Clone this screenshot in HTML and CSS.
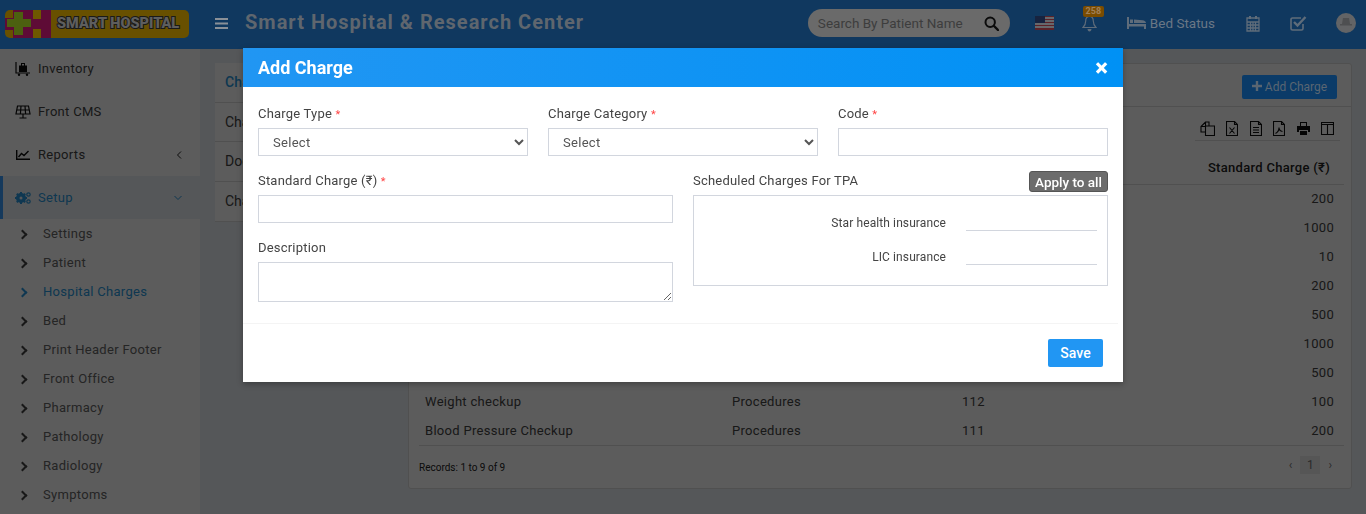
FILE: index.html
```html
<!doctype html>
<html>
  <head>
    <meta charset='utf-8'>
    <title>Smart Hospital</title>
    <link rel="stylesheet" href="styles.css">
  </head>
  <body>

    <div class='topbar'>
      <div class='logo'>
        <svg class='logo-mark' width='46' height='28' viewBox='0 0 46 28'>
          <path fill='#5e0b36' d='M8 0h38v28H8v-8H0V8h8z'/>
          <path fill='#4c6010' d='M9 2h9v7h8v8h-8v8H9v-8H2V9h7z'/>
          <path fill='#6e5800' d='M28 0h8v9h-8zM28 19h8v9h-8z'/>
        </svg>
        <span class='logo-text'>SMART HOSPITAL</span>
      </div>
      <svg class='burger' width='13' height='11' viewBox='0 0 13 11'>
        <path fill='#8a9097' d='M0 0h13v2H0zM0 4.500h13v2H0zM0 9h13v2H0z'/>
      </svg>
      <div class='site-name'>Smart Hospital &amp; Research Center</div>

      <div class='top-right'>
        <div class='search'>
          <span>Search By Patient Name</span>
          <svg width='15' height='15' viewBox='0 0 15 15'>
            <circle cx='6.200' cy='6.200' r='4.700' fill='none' stroke='#0b0b0b' stroke-width='2'/>
            <path d='M10 10l4 4' stroke='#0b0b0b' stroke-width='2.400' stroke-linecap='round'/>
          </svg>
        </div>
        <svg class='flag' width='19' height='14' viewBox='0 0 19 14'>
          <rect width='19' height='14' fill='#66686c'/>
          <path fill='#5c2228' d='M0 0h19v1H0zM0 3h19v1H0zM0 6h19v1H0zM0 9h19v1H0zM0 12h19v2H0z'/>
          <rect width='10' height='7' fill='#17233f'/>
        </svg>
        <div class='bell'>
          <span class='badge'>258</span>
          <svg width='15' height='17' viewBox='0 0 15 17'>
            <path fill='none' stroke='#5f6c7a' stroke-width='1.200' d='M7.500 1.500c-2.800 0-3.800 2.200-3.800 4.500 0 3-1 4.800-2.700 6.500h13c-1.700-1.700-2.700-3.500-2.700-6.500 0-2.300-1-4.500-3.800-4.500z'/>
            <path fill='#5f6c7a' d='M5.500 14h4c0 1.600-.9 2.500-2 2.500s-2-.9-2-2.500z'/>
          </svg>
        </div>
        <div class='bed'>
          <svg width='19' height='12' viewBox='0 0 19 12'>
            <path fill='#5f6c7a' d='M0 0h2v7h17v5h-2V9.500H2V12H0zM3 2.500h3V6H3zM7 2.500l8.500 .7c2 .2 3.500 1.300 3.500 3V6H7z'/>
          </svg>
          Bed Status
        </div>
        <svg class='top-icon cal-icon' width='14' height='17' viewBox='0 0 14 17'>
          <path fill='none' stroke='#5f6c7a' stroke-width='1.300' d='M1 3h12v13H1zM1 7h12M1 10h12M1 13h12M4.500 7v9M7 7v9M9.500 7v9'/>
          <path fill='#5f6c7a' d='M3 1h2v3H3zM9 1h2v3H9z'/>
        </svg>
        <svg class='top-icon' width='17' height='16' viewBox='0 0 17 16'>
          <path fill='none' stroke='#5f6c7a' stroke-width='1.600' d='M13 9v4.500a1.500 1.500 0 0 1-1.500 1.500H2.500A1.500 1.500 0 0 1 1 13.500V4.500A1.500 1.500 0 0 1 2.500 3H11'/>
          <path fill='none' stroke='#5f6c7a' stroke-width='2.400' d='M4 7l3.500 3.500L15.500 2'/>
        </svg>
        <svg class='avatar' width='20' height='20' viewBox='0 0 20 20'>
          <circle cx='10' cy='10' r='10' fill='#636466'/>
          <path fill='#4e4f51' d='M7 5h6l1 6H6zM4 11h12v1.500H4z'/>
        </svg>
      </div>
    </div>

    <div class='layout'>
      <div class='sidebar'>
        <div class='side-item'>
          <svg width='16' height='14' viewBox='0 0 16 14'>
            <path fill='none' stroke='#0e0e0e' stroke-width='1.200' d='M1 0v11h14'/>
            <path fill='#0e0e0e' d='M4 3.500h8V10H4zM6 1h4v2.500H9V2H7v1.500H6z'/>
            <circle cx='4' cy='12.700' r='1.200' fill='#0e0e0e'/><circle cx='12' cy='12.700' r='1.200' fill='#0e0e0e'/>
          </svg>
          Inventory
        </div>
        <div class='side-item'>
          <svg width='16' height='14' viewBox='0 0 16 14'>
            <path fill='none' stroke='#0e0e0e' stroke-width='1.200' d='M2.500 1h11L15 9H1zM1.800 5h12.400M6 1l-.6 8M10 1l.6 8M8 9v3.500M4.500 13h7'/>
          </svg>
          Front CMS
        </div>
        <div class='side-item'>
          <svg width='14' height='10' viewBox='0 0 14 10'>
            <path fill='none' stroke='#0e0e0e' stroke-width='1.400' d='M.700 0v9.300H14M2.500 7l3-3.500 2.500 2L12.500 1'/>
          </svg>
          Reports
          <svg class='caret' width='6' height='8' viewBox='0 0 6 8'>
            <path fill='none' stroke='#222' d='M5 .5L1.500 4 5 7.500'/>
          </svg>
        </div>
        <div class='side-item side-active'>
          <svg width='16' height='12' viewBox='0 0 16 12'>
            <circle cx='6' cy='6' r='3.600' fill='none' stroke='#2a9ae0' stroke-width='3'/>
            <path stroke='#2a9ae0' stroke-width='2' d='M6 0v12M0 6h12M1.800 1.800l8.400 8.400M10.200 1.800l-8.400 8.400'/>
            <circle cx='6' cy='6' r='1.500' fill='#ecf0f5'/>
            <circle cx='13.500' cy='2.500' r='1.700' fill='none' stroke='#2a9ae0' stroke-width='1.200'/>
            <circle cx='13.500' cy='9.500' r='1.700' fill='none' stroke='#2a9ae0' stroke-width='1.200'/>
          </svg>
          Setup
          <svg class='caret' width='8' height='6' viewBox='0 0 8 6'>
            <path fill='none' stroke='#2a9ae0' d='M.5 1L4 4.500 7.500 1'/>
          </svg>
        </div>
        <ul class='side-sub'>
          <li>Settings</li>
          <li>Patient</li>
          <li class='current'>Hospital Charges</li>
          <li>Bed</li>
          <li>Print Header Footer</li>
          <li>Front Office</li>
          <li>Pharmacy</li>
          <li>Pathology</li>
          <li>Radiology</li>
          <li>Symptoms</li>
        </ul>
      </div>

      <div class='content'>
        <div class='tabs'>
          <div class='tab tab-active'>Charges</div>
          <div class='tab'>Charge Category</div>
          <div class='tab'>Doctor OPD Charge</div>
          <div class='tab'>Charge Type</div>
        </div>

        <div class='card'>
          <div class='card-head'>
            <button class='add-btn'>
              <svg width='10' height='10' viewBox='0 0 10 10'><path fill='#5a6672' d='M3.800 0h2.400v3.800H10v2.400H6.200V10H3.800V6.200H0V3.800h3.800z'/></svg>
              Add Charge
            </button>
          </div>
          <div class='tools'>
            <svg width='15' height='15' viewBox='0 0 15 15'><path fill='none' stroke='#0e0e0e' stroke-width='1.100' d='M5.500 5h9v9.500h-9zM5.500 11H1V5.500L5.500 1H9v4M5.500 1v4.500H1'/></svg>
            <svg width='12' height='15' viewBox='0 0 12 15'><path fill='none' stroke='#0e0e0e' stroke-width='1.100' d='M.5 .5h8l3 3v11H.5zM8.500 .5v3h3M3.500 6.500l5 6M8.500 6.500l-5 6'/></svg>
            <svg width='12' height='15' viewBox='0 0 12 15'><path fill='none' stroke='#0e0e0e' stroke-width='1.100' d='M.5 .5h8l3 3v11H.5zM8.500 .5v3h3M3 6.500h6M3 9h6M3 11.500h6'/></svg>
            <svg width='12' height='15' viewBox='0 0 12 15'><path fill='none' stroke='#0e0e0e' stroke-width='1.100' d='M.5 .5h8l3 3v11H.5zM8.500 .5v3h3M2.500 12.500c2-1 3.500-3.500 3.500-6 0 2.500 1 3.500 3.500 4'/></svg>
            <svg width='13' height='13' viewBox='0 0 13 13'><path fill='#0e0e0e' d='M3 0h7v4H9V1H4v3H3zM0 4h13v6h-2V8H2v2H0zM3 9h7v4H3z'/></svg>
            <svg width='13' height='13' viewBox='0 0 13 13'><path fill='none' stroke='#0e0e0e' stroke-width='1.100' d='M.5 .5h12v12H.5zM.5 2.500h12M6.500 2.500v10'/></svg>
          </div>
          <table class='charges'>
            <thead>
              <tr><th></th><th></th><th></th><th class='num'>Standard Charge (₹)</th></tr>
            </thead>
            <tbody>
              <tr><td></td><td></td><td></td><td class='num'>200</td></tr>
              <tr><td></td><td></td><td></td><td class='num'>1000</td></tr>
              <tr><td></td><td></td><td></td><td class='num'>10</td></tr>
              <tr><td></td><td></td><td></td><td class='num'>200</td></tr>
              <tr><td></td><td></td><td></td><td class='num'>500</td></tr>
              <tr><td></td><td></td><td></td><td class='num'>1000</td></tr>
              <tr><td></td><td></td><td></td><td class='num'>500</td></tr>
              <tr><td>Weight checkup</td><td>Procedures</td><td>112</td><td class='num'>100</td></tr>
              <tr><td>Blood Pressure Checkup</td><td>Procedures</td><td>111</td><td class='num'>200</td></tr>
            </tbody>
          </table>
          <div class='card-foot'>
            <span>Records: 1 to 9 of 9</span>
            <div class='pager'><i>‹</i><b>1</b><i>›</i></div>
          </div>
        </div>
      </div>
    </div>

    <div class='backdrop'></div>

    <div class='modal'>
      <div class='modal-head'>
        <span>Add Charge</span>
        <span class='close'>×</span>
      </div>
      <div class='modal-body'>
        <div class='row-three'>
          <div class='field'>
            <label>Charge Type <em>*</em></label>
            <select><option>Select</option></select>
          </div>
          <div class='field'>
            <label>Charge Category <em>*</em></label>
            <select><option>Select</option></select>
          </div>
          <div class='field'>
            <label>Code <em>*</em></label>
            <input type='text'>
          </div>
        </div>
        <div class='row-two'>
          <div>
            <div class='field'>
              <label>Standard Charge (₹) <em>*</em></label>
              <input type='text'>
            </div>
            <div class='field'>
              <label>Description</label>
              <textarea></textarea>
            </div>
          </div>
          <div>
            <div class='tpa-head'>
              <label>Scheduled Charges For TPA</label>
              <button class='apply'>Apply to all</button>
            </div>
            <div class='tpa-box'>
              <div class='tpa-row'><span>Star health insurance</span><input type='text'></div>
              <div class='tpa-row'><span>LIC insurance</span><input type='text'></div>
            </div>
          </div>
        </div>
      </div>
      <div class='modal-foot'>
        <button class='save'>Save</button>
      </div>
    </div>

  </body>
</html>
```

FILE: styles.css
```css
* {
  box-sizing: border-box;
}

html, body {
  height: 514px;
  overflow: hidden;
}

body {
  margin: 0;
  background: #ecf0f5;
  font-family: Roboto, 'Liberation Sans', sans-serif;
  font-size: 13px;
  color: #222;
}

/* top bar sits above the backdrop, so its colours are the dimmed ones */
.topbar {
  position: relative;
  z-index: 1;
  height: 49px;
  display: flex;
  align-items: center;
  background: #10385f;
  padding: 0 0 3px 5px;
}

.logo {
  width: 184px;
  height: 28px;
  margin-top: 1px;
  display: flex;
  align-items: center;
  background: #685000;
  border-radius: 5px;
}

.logo-mark {
  flex: none;
}

.logo-text {
  margin-left: 6px;
  font-size: 14.500px;
  font-weight: 900;
  color: #5e5e5e;
  -webkit-text-stroke: 2px #1a1a1a;
  paint-order: stroke fill;
  white-space: nowrap;
}

.burger {
  margin-left: 26px;
}

.site-name {
  margin: -2px 0 0 17px;
  font-size: 20px;
  font-weight: 700;
  letter-spacing: 1px;
  color: #5f666e;
}

.top-right {
  margin-left: auto;
  display: flex;
  align-items: center;
  padding-right: 10px;
}

.search {
  width: 202px;
  height: 28px;
  border-radius: 14px;
  background: #6a6a6a;
  display: flex;
  align-items: center;
  justify-content: space-between;
  padding: 0 11px 0 10px;
  color: #3d3d3d;
  font-size: 13.500px;
}

.flag {
  margin-left: 25px;
}

.bell {
  margin-left: 28px;
  position: relative;
  height: 17px;
}

.badge {
  position: absolute;
  left: 1px;
  top: -9px;
  width: 21px;
  text-align: center;
  border-radius: 2px;
  background: #7a4c00;
  color: #a08058;
  font-size: 9px;
  font-weight: 700;
  line-height: 11px;
}

.bed {
  margin-left: 30px;
  display: flex;
  align-items: center;
  gap: 4px;
  color: #6a7785;
  font-size: 13.500px;
}

.top-icon {
  margin-left: 30px;
}

.cal-icon {
  margin-left: 31px;
}

.avatar {
  margin-left: 29px;
}

/* page */
.layout {
  display: flex;
  height: 465px;
}

.sidebar {
  width: 200px;
  flex: none;
  background: #fff;
}

.side-item {
  height: 43px;
  display: flex;
  align-items: center;
  gap: 7px;
  padding-left: 15px;
  padding-right: 18px;
  letter-spacing: 0.3px;
  color: #444;
}

.side-item:first-child {
  height: 41px;
  padding-bottom: 2px;
}

.side-item svg {
  flex: none;
}

.side-item svg:first-child {
  width: 16px;
}

.side-item .caret {
  margin-left: auto;
}

.side-active {
  background: #ecf0f5;
  border-left: 3px solid #3a9fff;
  padding-left: 12px;
  color: #2a9ae0;
}

.side-sub {
  list-style: none;
  margin: 0;
  padding: 0;
}

.side-sub li {
  height: 29px;
  line-height: 29px;
  padding-left: 43px;
  position: relative;
  letter-spacing: 0.3px;
  color: #666;
}

.side-sub li:before {
  content: '';
  position: absolute;
  left: 19px;
  top: 12px;
  width: 5px;
  height: 5px;
  border-top: 2px solid #444;
  border-right: 2px solid #444;
  transform: rotate(45deg);
}

.side-sub .current {
  color: #2a9ae0;
}

.side-sub .current:before {
  border-color: #2a9ae0;
}

.content {
  flex: 1;
  display: flex;
  align-items: flex-start;
  gap: 15px;
  padding: 14px 14px 0 15px;
}

.tabs {
  width: 178px;
  background: #fff;
}

.tab {
  height: 39.700px;
  line-height: 39px;
  padding-left: 10px;
  border-bottom: 1px solid #ddd;
  color: #444;
  white-space: nowrap;
  font-size: 14px;
}

.tab-active {
  color: #2a9ae0;
  font-weight: 500;
}

.card {
  flex: 1;
  height: 426px;
  background: #fff;
  border: 1px solid #ddd;
  border-radius: 3px;
}

.card-head {
  height: 43px;
  display: flex;
  align-items: center;
  justify-content: flex-end;
  padding: 3px 14px 0 0;
  border-bottom: 1px solid #ddd;
}

/* dimmed colour set directly, like the top bar */
.add-btn {
  position: relative;
  z-index: 1;
  width: 95px;
  height: 24px;
  padding: 0;
  border: 0;
  border-radius: 2px;
  background: #0b3b68;
  color: #5a6672;
  font: 12px Roboto, sans-serif;
}

.tools {
  height: 34px;
  display: flex;
  align-items: center;
  justify-content: flex-end;
  gap: 11.500px;
  padding: 9px 6px 0 0;
  margin: 0 11px 0 786px;
  border-bottom: 1px solid #ddd;
}

.charges {
  width: 928px;
  margin-left: 7px;
  border-collapse: collapse;
  table-layout: fixed;
  letter-spacing: 0.3px;
}

.charges th {
  height: 43px;
  font-weight: 500;
  padding: 10px 0 0;
  border-bottom: 1px solid #ddd;
}

.charges td {
  height: 29px;
  padding: 0;
  color: #444;
}

.charges th:nth-child(1), .charges td:nth-child(1) {
  width: 316px;
  padding-left: 9px;
}

.charges th:nth-child(2), .charges td:nth-child(2) {
  width: 230px;
}

.charges th:nth-child(3), .charges td:nth-child(3) {
  width: 200px;
}

.charges .num {
  text-align: right;
  padding-right: 10px;
}

.charges th.num {
  padding-right: 14px;
}

.card-foot {
  margin: 0 7px 0 10px;
  height: 44px;
  display: flex;
  align-items: center;
  justify-content: space-between;
  border-top: 1px solid #ddd;
  font-size: 10px;
  color: #222;
}

.pager {
  display: flex;
  align-items: center;
  gap: 8px;
  padding-right: 12px;
  margin-bottom: 6px;
  color: #777;
  font-size: 12px;
}

.pager i {
  font-style: normal;
}

.pager b {
  width: 20px;
  height: 18px;
  line-height: 18px;
  text-align: center;
  background: #eee;
  font-weight: 400;
}

/* modal */
.backdrop {
  position: fixed;
  left: 0;
  top: 0;
  right: 0;
  bottom: 0;
  background: rgba(0, 0, 0, 0.64);
}

.modal {
  position: absolute;
  z-index: 2;
  left: 243px;
  top: 48px;
  width: 880px;
  height: 334px;
  background: #fff;
  box-shadow: 0 2px 6px rgba(0, 0, 0, 0.3);
}

.modal-head {
  height: 39px;
  display: flex;
  align-items: center;
  justify-content: space-between;
  padding: 0 15px;
  background: linear-gradient(to right, #2196f3, #0091f5);
  color: #fff;
  font-size: 18px;
  font-weight: 700;
}

.close {
  font-size: 24px;
  font-weight: 900;
}

.modal-body {
  padding: 18px 10px 0 15px;
  margin-right: 5px;
  height: 237px;
  border-bottom: 1px solid #f4f4f4;
  letter-spacing: 0.2px;
}

.row-three {
  display: grid;
  grid-template-columns: repeat(3, 270px);
  gap: 20px;
}

.row-two {
  display: grid;
  grid-template-columns: 415px 415px;
  gap: 20px;
  margin-top: 16px;
}

.field {
  margin-bottom: 16px;
}

.row-three .field {
  margin-bottom: 0;
}

label {
  display: block;
  height: 17px;
  line-height: 17px;
  color: #444;
  margin-bottom: 6px;
}

label em {
  color: #f44;
  font-style: normal;
  font-size: 11px;
}

.field select, .field input, .field textarea {
  display: block;
  width: 100%;
  height: 28px;
  border: 1px solid #d2d6de;
  background: #fff;
  border-radius: 0;
  outline: 0;
  font: 13px Roboto, sans-serif;
  letter-spacing: 0.3px;
  color: #555;
}

.field select {
  padding-left: 10px;
}

.field textarea {
  height: 40px;
}

.tpa-head {
  display: flex;
  justify-content: space-between;
  height: 23px;
}

.apply {
  height: 21px;
  padding: 0 5px;
  margin-top: -1px;
  border: 1px solid #555;
  border-radius: 3px;
  background: #6c6c6c;
  color: #fff;
  font: 500 13.500px Roboto, sans-serif;
}

.tpa-box {
  height: 91px;
  border: 1px solid #d2d6de;
  padding: 10px 10px 0 0;
}

.tpa-row {
  display: flex;
  align-items: center;
  justify-content: flex-end;
  gap: 20px;
  height: 34px;
  font-size: 12px;
  letter-spacing: 0.1px;
  color: #444;
}

.tpa-row input {
  width: 131px;
  height: 16px;
  border: 0;
  border-bottom: 1px solid #d2d6de;
  outline: 0;
}

.modal-foot {
  display: flex;
  justify-content: flex-end;
  padding: 15px 20px 0 0;
}

.save {
  width: 55px;
  height: 28px;
  padding: 0;
  border: 0;
  border-radius: 2px;
  background: #2196f3;
  color: #fff;
  font: 500 14px Roboto, sans-serif;
}
```
